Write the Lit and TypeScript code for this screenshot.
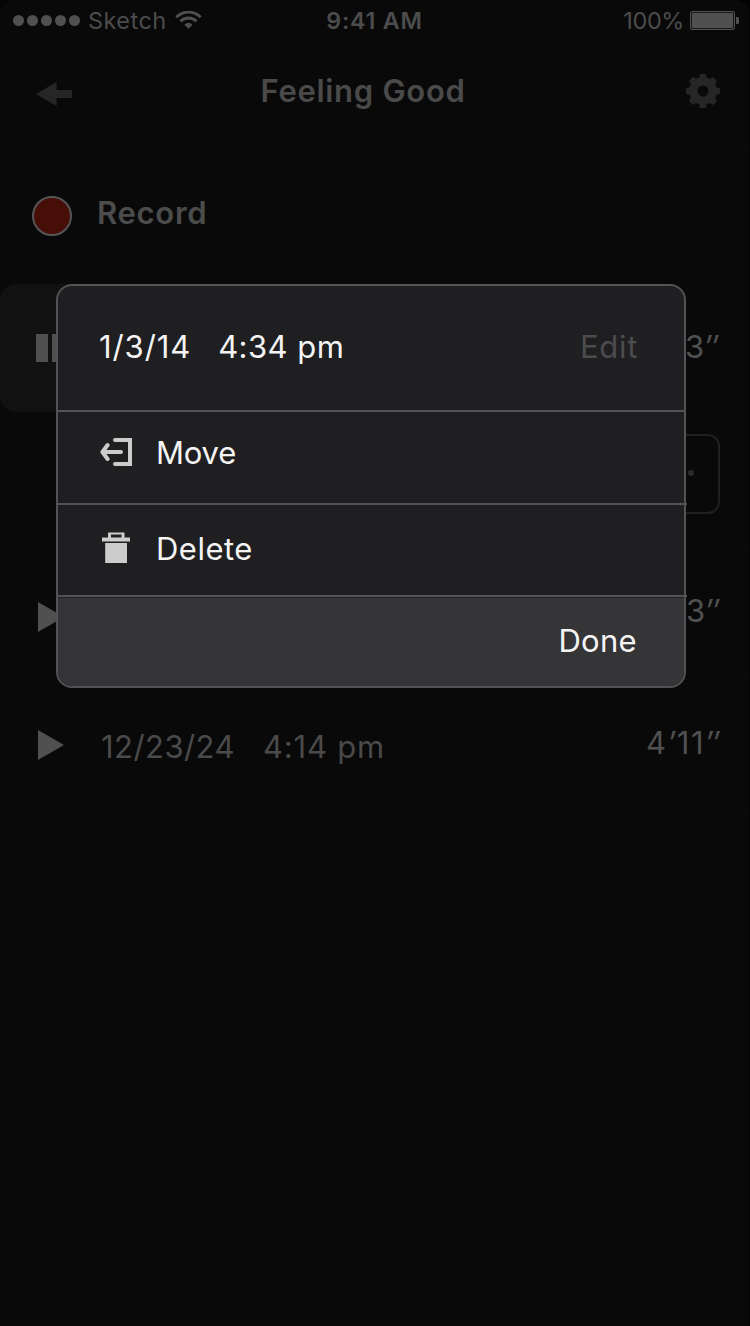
import { LitElement, html, svg, css } from "lit";
import { customElement, property } from "lit/decorators.js";

const gearTeeth = [0, 45, 90, 135, 180, 225, 270, 315];

@customElement("play-icon")
class PlayIcon extends LitElement {
  static styles = css`
    :host { display: block; width: 26px; height: 30px; }
    svg { display: block; }
  `;
  render() {
    return html`<svg width="26" height="30" viewBox="0 0 26 30"><path d="M0 0 26 15 0 30Z" fill="#505050" /></svg>`;
  }
}

@customElement("time-length")
class TimeLength extends LitElement {
  @property() minutes = "";
  @property() seconds = "";
  static styles = css`
    :host { display: block; color: #505050; }
    .prime { font-style: italic; }
    .wide { letter-spacing: 1.8px; margin-right: -2px; }
  `;
  render() {
    return this.minutes
      ? html`<span class="wide">${this.minutes}<span class="prime">′</span>${this.seconds}<span class="prime">″</span></span>`
      : html`<span>${this.seconds}<span class="prime">″</span></span>`;
  }
}

@customElement("status-bar")
class StatusBar extends LitElement {
  static styles = css`
    :host { display: flex; height: 40px; box-sizing: border-box; padding: 5px 10px 0 13px; color: #4c4c4c; font-size: 23.5px; line-height: 32px; }
    .side { display: flex; flex: 1; height: 32px; }
    .right { justify-content: flex-end; }
    .dots { display: flex; gap: 3px; padding-top: 10px; }
    .dot { width: 11px; height: 11px; border-radius: 50%; background: #505050; }
    .carrier { margin-left: 8px; letter-spacing: 0.45px; }
    .time { font-weight: 600; font-size: 23.25px; letter-spacing: 0.75px; margin-right: 3px; }
    .wifi { margin: 6px 0 0 8px; }
    .battery { margin: 6px 0 0 6px; }
    .pct { letter-spacing: -0.4px; }
    svg { display: block; flex: none; }
  `;
  render() {
    return html`
      <div class="side">
        <div class="dots">${[0, 1, 2, 3, 4].map(() => html`<i class="dot"></i>`)}</div>
        <span class="carrier">Sketch</span>
        <svg class="wifi" width="27" height="18" viewBox="0 0 27 18" fill="none" stroke="#505050" stroke-width="2.8">
          <path d="M1.3 6.2C8.2-.6 18.8-.6 25.7 6.2" />
          <path d="M5.5 10.3C10 5.9 17 5.9 21.5 10.3" />
          <path d="M13.5 17.8 9.4 13.7C11.7 11.5 15.3 11.5 17.6 13.7Z" fill="#505050" stroke="none" />
        </svg>
      </div>
      <span class="time">9:41 AM</span>
      <div class="side right">
        <span class="pct">100%</span>
        <svg class="battery" width="49" height="19" viewBox="0 0 49 19">
          <rect x=".6" y=".6" width="43.8" height="17.8" rx="1.8" fill="none" stroke="#505050" stroke-width="1.2" />
          <rect x="2" y="2" width="41" height="15" rx=".8" fill="#505050" />
          <path d="M46 6h1.5a1.5 1.5 0 0 1 1.5 1.5v4a1.5 1.5 0 0 1-1.5 1.5H46Z" fill="#505050" />
        </svg>
      </div>`;
  }
}

@customElement("nav-header")
class NavHeader extends LitElement {
  static styles = css`
    :host { display: flex; justify-content: space-between; align-items: flex-start; height: 110px; box-sizing: border-box; padding: 30px 28px 0 36px; }
    .title { color: #4a4a4a; font-size: 31px; font-weight: 600; line-height: 42px; letter-spacing: 0.7px; margin-right: 31px; }
    .back { margin-top: 12px; }
    .gear { margin-top: 3px; }
    svg { display: block; }
  `;
  render() {
    return html`
      <svg class="back" width="36" height="24" viewBox="0 0 36 24"><path d="M0 12 20.5 0V8H36V16H20.5V24Z" fill="#262626" /></svg>
      <span class="title">Feeling Good</span>
      <svg class="gear" width="36" height="36" viewBox="-18 -18 36 36">
        <g fill="#262626">${gearTeeth.map((a) => svg`<path d="M-2.8-17H2.8L4.6-10H-4.6Z" transform="rotate(${a})" />`)}</g>
        <circle r="9.7" fill="none" stroke="#262626" stroke-width="8.4" />
      </svg>`;
  }
}

@customElement("recording-row")
class RecordingRow extends LitElement {
  @property() when = "";
  @property() at = "";
  @property() minutes = "";
  @property() seconds = "";
  static styles = css`
    :host { display: flex; box-sizing: border-box; height: 130px; color: #4a4a4a; font-size: 31px; line-height: 40px; padding-right: 30px; }
    play-icon { margin: 50px 0 0 38px; }
    .label { display: flex; gap: 28px; margin: 47px 0 0 37px; }
    .when { letter-spacing: 0.45px; }
    .at { letter-spacing: 0.8px; }
    time-length { margin: 43px 0 0 auto; }
    :host(.second) { height: 133px; }
    :host(.second) play-icon { margin-top: 55px; }
    :host(.second) time-length { margin-top: 44px; }
  `;
  render() {
    return html`<play-icon></play-icon>
      <div class="label"><span class="when">${this.when}</span><span class="at">${this.at}</span></div>
      <time-length .minutes=${this.minutes} .seconds=${this.seconds}></time-length>`;
  }
}

@customElement("action-dialog")
class ActionDialog extends LitElement {
  static styles = css`
    :host { display: block; box-sizing: border-box; width: 630px; height: 404px; border: 2px solid #535355; border-radius: 16px; background: #1f1f21; color: #f4f4f4; font-size: 31px; line-height: 40px; }
    .row { display: flex; box-sizing: border-box; border-bottom: 2px solid #535355; }
    .head { height: 126px; padding: 41px 46px 0 41px; }
    .date { letter-spacing: 0.9px; }
    .time { margin-left: 27px; letter-spacing: 0.45px; }
    .edit { margin-left: auto; color: #4c4c4e; letter-spacing: 0.7px; }
    .item { height: 93px; width: 629px; }
    .move { padding: 21px 0 0 42px; letter-spacing: -0.2px; }
    .delete { height: 92px; padding: 24px 0 0 44px; letter-spacing: 0.5px; }
    .move svg { margin: 5px 24px 0 0; }
    .delete svg { margin: 3px 26px 0 0; }
    .foot { display: flex; justify-content: flex-end; box-sizing: border-box; height: 88px; margin-top: 1px; padding: 23px 47px 0 0; background: #353537; border-radius: 0 0 14px 14px; letter-spacing: 0.3px; }
    svg { display: block; flex: none; }
  `;
  render() {
    return html`
      <div class="row head"><span class="date">1/3/14</span><span class="time">4:34 pm</span><span class="edit">Edit</span></div>
      <div class="row item move">
        <svg width="32" height="28" viewBox="0 0 32 28" fill="none" stroke="#cccccc" stroke-width="4" stroke-linecap="round">
          <path d="M15 2H30V26H15" /><path d="M3 14H21" /><path d="M7.6 7 2.4 14 7.6 21" stroke-linejoin="round" />
        </svg>
        <span>Move</span>
      </div>
      <div class="row item delete">
        <svg width="28" height="31" viewBox="0 0 28 31" fill="#cccccc">
          <path d="M6 5.5V.5H22.5V5.5H28V9.5H0V5.5ZM9 2.5V5.5H19.5V2.5Z" fill-rule="evenodd" />
          <path d="M3.2 11H25V31H3.2Z" />
        </svg>
        <span>Delete</span>
      </div>
      <div class="foot"><span>Done</span></div>`;
  }
}

@customElement("app-root")
class AppRoot extends LitElement {
  static styles = css`
    :host { display: block; position: relative; width: 750px; height: 1326px; overflow: hidden; background: #030303; font-family: Inter, "Liberation Sans", sans-serif; }
    .screen { display: flex; flex-direction: column; width: 749px; height: 1326px; background: #090909; border-radius: 14px 14px 0 0; overflow: hidden; }
    .record { display: flex; box-sizing: border-box; height: 134px; padding: 42px 0 0 32px; border-top: 1px solid #0c0c0c; color: #4c4c4c; font-size: 31px; font-weight: 600; line-height: 40px; letter-spacing: 0.7px; }
    .knob { box-sizing: border-box; width: 40px; height: 40px; margin: 3px 25px 0 0; border: 2px solid #555; border-radius: 50%; background: #470e08; }
    .current { display: grid; grid-template-columns: 400px 1fr; grid-template-rows: 128px 134px; height: 262px; color: #505050; font-size: 31px; line-height: 40px; }
    .card { display: flex; gap: 4px; padding: 50px 0 0 36px; border-radius: 16px; background: #111111; }
    .bar { width: 12px; height: 28px; background: #505050; }
    .len { justify-self: end; margin: 43px 31px 0 0; }
    .more { grid-column: 2; justify-self: end; box-sizing: border-box; display: flex; justify-content: flex-end; align-items: center; width: 80px; height: 80px; margin: 22px 29px 0 0; padding: 0 24px 2px 0; border: 2px solid #202020; border-radius: 12px; }
    .pip { width: 6px; height: 6px; border-radius: 50%; background: #2b2b2b; }
    recording-row { border-top: 1px solid #0c0c0c; }
    .end { border-top: 1px solid #0c0c0c; }
    action-dialog { position: absolute; left: 56px; top: 284px; }
  `;
  render() {
    return html`
      <main class="screen">
        <status-bar></status-bar>
        <nav-header></nav-header>
        <section class="record"><i class="knob"></i><span>Record</span></section>
        <section class="current">
          <div class="card"><i class="bar"></i><i class="bar"></i></div>
          <time-length class="len" seconds="3"></time-length>
          <div class="more"><i class="pip"></i></div>
        </section>
        <recording-row class="second" seconds="3"></recording-row>
        <recording-row when="12/23/24" at="4:14 pm" minutes="4" seconds="11"></recording-row>
        <div class="end"></div>
      </main>
      <action-dialog></action-dialog>`;
  }
}
